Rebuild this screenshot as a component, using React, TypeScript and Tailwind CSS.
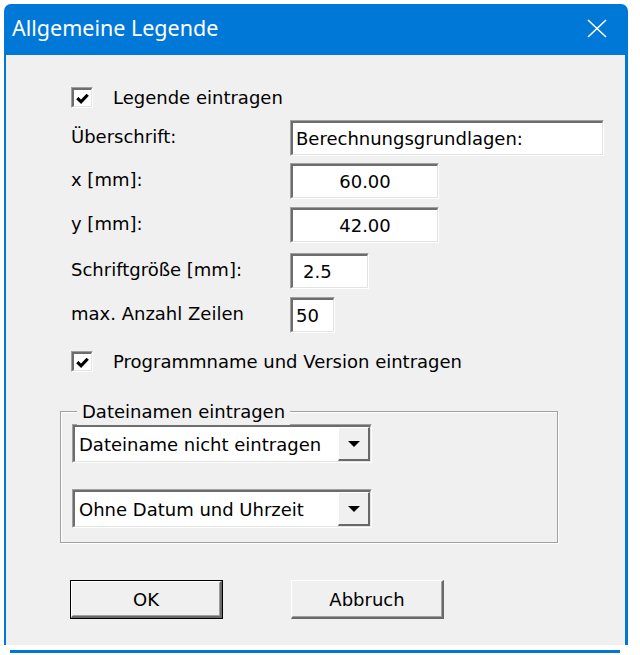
import type { ReactNode } from "react";

const ui = "font-['DejaVu_Sans',sans-serif] text-[18px] text-black";

function Sunken({ className = "", children }: { className?: string; children?: ReactNode }) {
  return (
    <div className={`border border-t-[#a0a0a0] border-l-[#a0a0a0] border-b-white border-r-white ${className}`}>
      <div className="h-full w-full border-t-2 border-l-2 border-b border-r border-t-[#6d6d6d] border-l-[#6d6d6d] border-b-[#e3e3e3] border-r-[#e3e3e3] bg-white flex items-center">
        {children}
      </div>
    </div>
  );
}

function Check({ label }: { label: string }) {
  return (
    <div className="flex items-center h-[21px]">
      <Sunken className="w-[22px] h-[21px]">
        <svg viewBox="0 0 18 17" className="w-[18px] h-[17px]">
          <path d="M3.5 8 L7.5 12 L14.5 4.5" fill="none" stroke="#000" strokeWidth="3.4" />
        </svg>
      </Sunken>
      <span className="ml-[20px]">{label}</span>
    </div>
  );
}

function Field({ label, w, value, align = "left", pl = 5 }: { label: string; w: string; value: string; align?: "left" | "center"; pl?: number }) {
  return (
    <div className="flex items-center h-[36px]">
      <span className="w-[219px] shrink-0 -mt-[3px]">{label}</span>
      <Sunken className={`${w} h-[36px]`}>
        <span
          className={align === "center" ? "w-full text-center" : pl === 12 ? "pl-[10px]" : "pl-[3px]"}
        >
          {value}
        </span>
      </Sunken>
    </div>
  );
}

function Combo({ value }: { value: string }) {
  return (
    <div className="w-[300px] h-[39px] border border-t-[#a0a0a0] border-l-[#a0a0a0] border-b-white border-r-white">
      <div className="h-full border-t-2 border-l-2 border-b border-r border-t-[#6d6d6d] border-l-[#6d6d6d] border-b-[#e3e3e3] border-r-[#e3e3e3] bg-white flex items-center">
        <span className="flex-1 pl-[4px]">{value}</span>
        <div className="w-[32px] h-full border-t border-l border-b-2 border-r-2 border-t-white border-l-white border-b-[#696969] border-r-[#696969] bg-[#f0f0f0] flex items-center justify-center">
          <svg viewBox="0 0 12 6" className="w-[12px] h-[6px]">
            <path d="M0 0 H12 L6 6 Z" fill="#000" />
          </svg>
        </div>
      </div>
    </div>
  );
}

function Btn({ label, def }: { label: string; def?: boolean }) {
  return (
    <div className={`w-[153px] h-[39px] ${def ? "border border-black" : ""}`}>
      <div className="h-full border-t border-l border-b-2 border-r-2 border-t-white border-l-white border-b-[#696969] border-r-[#696969] bg-[#f0f0f0]">
        <div className="h-full border border-t-[#f0f0f0] border-l-[#f0f0f0] border-b-[#a0a0a0] border-r-[#a0a0a0] flex items-center justify-center">
          {label}
        </div>
      </div>
    </div>
  );
}

export default function App() {
  return (
    <div className="w-[640px] h-[655px] bg-white overflow-hidden pt-[4px]">
      <div className="ml-[4px] w-[624px]">
        <div className="h-[51px] bg-[#0078d7] rounded-t-[7px] flex items-center justify-between pl-[8px] pr-[21px]">
          <span className="font-['Noto_Sans',sans-serif] text-[21.5px] text-white -mt-[2px]">Allgemeine Legende</span>
          <svg viewBox="0 0 20 19" className="w-[20px] h-[19px] -mt-[2px]">
            <path d="M1 1 L19 18 M19 1 L1 18" stroke="#fff" strokeWidth="1.6" />
          </svg>
        </div>
        <div className={`h-[590px] bg-[#f0f0f0] border-l-2 border-r-[3px] border-[#0078d7] pl-[65px] ${ui}`}>
          <div className="pt-[32px]">
            <Check label="Legende eintragen" />
          </div>
          <div className="mt-[12px] flex flex-col gap-[7px]">
            <Field label="Überschrift:" w="w-[314px]" value="Berechnungsgrundlagen:" />
            <Field label="x [mm]:" w="w-[149px]" value="60.00" align="center" />
            <div className="mt-[1px]">
              <Field label="y [mm]:" w="w-[149px]" value="42.00" align="center" />
            </div>
            <div className="mt-[3px]">
              <Field label="Schriftgröße [mm]:" w="w-[79px]" value="2.5" pl={12} />
            </div>
            <div className="mt-[1px]">
              <Field label="max. Anzahl Zeilen" w="w-[45px]" value="50" />
            </div>
          </div>
          <div className="mt-[18px]">
            <Check label="Programmname und Version eintragen" />
          </div>
          <div className="relative mt-[39px] -ml-[11px] w-[498px] h-[132px] border border-[#a0a0a0] shadow-[1px_1px_0_#fff,inset_1px_1px_0_#fff] pt-[12px] pl-[11px]">
            <span className="absolute -top-[14px] left-[16px] bg-[#f0f0f0] px-[5px]">Dateinamen eintragen</span>
            <Combo value="Dateiname nicht eintragen" />
            <div className="mt-[26px]">
              <Combo value="Ohne Datum und Uhrzeit" />
            </div>
          </div>
          <div className="mt-[37px] -ml-[1px] flex gap-[68px]">
            <Btn label="OK" def />
            <Btn label="Abbruch" />
          </div>
        </div>
      </div>
      <div className="mt-[5px] ml-[10px] w-[610px] h-[3px] bg-[#0078d7]" />
    </div>
  );
}
